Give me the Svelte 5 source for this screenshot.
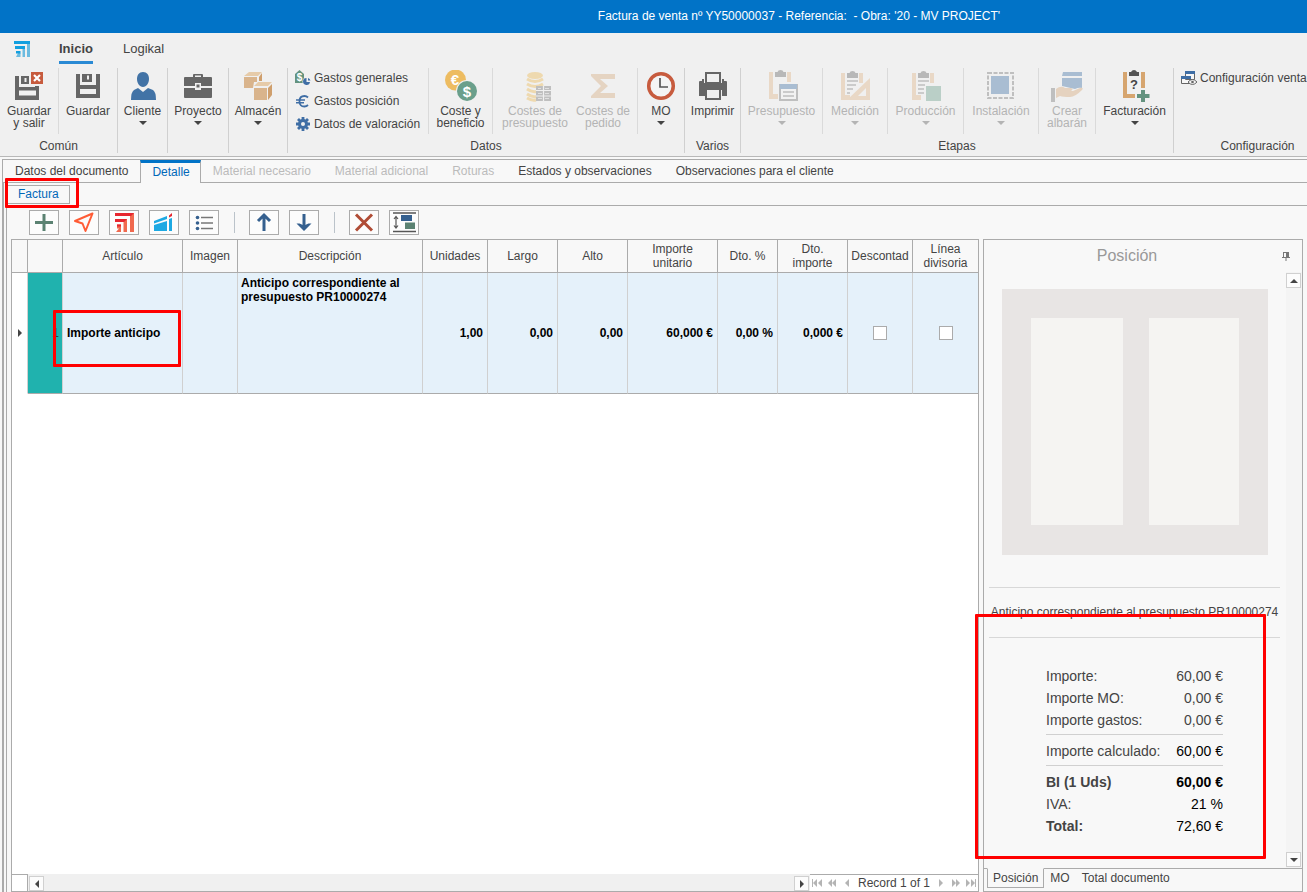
<script>
  let activeTab = $state('Detalle');
  let activePanel = $state('Posición');

  const groups = [
    {
      label: 'Común',
      clusters: [
        { width: 59, buttons: [{ icon: 'saveExit', lines: ['Guardar', 'y salir'] }] },
        { width: 58, buttons: [{ icon: 'save', lines: ['Guardar'] }] }
      ]
    },
    { label: '', clusters: [{ width: 49, buttons: [{ icon: 'client', lines: ['Cliente'], menu: true }] }] },
    { label: '', clusters: [{ width: 60, buttons: [{ icon: 'project', lines: ['Proyecto'], menu: true }] }] },
    { label: '', clusters: [{ width: 58, buttons: [{ icon: 'store', lines: ['Almacén'], menu: true }] }] },
    {
      label: 'Datos',
      clusters: [
        {
          width: 141,
          small: [
            { icon: 'tag', text: 'Gastos generales' },
            { icon: 'euro', text: 'Gastos posición' },
            { icon: 'gear', text: 'Datos de valoración' }
          ]
        },
        { width: 64, buttons: [{ icon: 'cost', lines: ['Coste y', 'beneficio'] }] },
        {
          width: 145,
          buttons: [
            { icon: 'coins', lines: ['Costes de', 'presupuesto'], off: true },
            { icon: 'sigma', lines: ['Costes de', 'pedido'], off: true }
          ]
        },
        { width: 46, buttons: [{ icon: 'clock', lines: ['MO'], menu: true }] }
      ]
    },
    { label: 'Varios', clusters: [{ width: 55, buttons: [{ icon: 'printer', lines: ['Imprimir'] }] }] },
    {
      label: 'Etapas',
      clusters: [
        { width: 82, buttons: [{ icon: 'budget', lines: ['Presupuesto'], menu: true, off: true }] },
        { width: 65, buttons: [{ icon: 'measure', lines: ['Medición'], menu: true, off: true }] },
        { width: 76, buttons: [{ icon: 'production', lines: ['Producción'], menu: true, off: true }] },
        { width: 75, buttons: [{ icon: 'install', lines: ['Instalación'], menu: true, off: true }] },
        { width: 57, buttons: [{ icon: 'delivery', lines: ['Crear', 'albarán'], off: true }] },
        { width: 77, buttons: [{ icon: 'invoice', lines: ['Facturación'], menu: true }] }
      ]
    },
    {
      label: 'Configuración',
      clusters: [{ width: 167, small: [{ icon: 'config', text: 'Configuración ventanas' }] }]
    }
  ];

  const tabs = [
    { name: 'Datos del documento' },
    { name: 'Detalle' },
    { name: 'Material necesario', off: true },
    { name: 'Material adicional', off: true },
    { name: 'Roturas', off: true },
    { name: 'Estados y observaciones' },
    { name: 'Observaciones para el cliente' }
  ];

  const tools = [
    { icon: 'add', title: 'Añadir' },
    { icon: 'send', title: 'Enviar' },
    { icon: 'profile', title: 'Perfil' },
    { icon: 'chart', title: 'Logikal' },
    { icon: 'list', title: 'Lista' },
    null,
    { icon: 'up', title: 'Subir' },
    { icon: 'down', title: 'Bajar' },
    null,
    { icon: 'remove', title: 'Eliminar' },
    { icon: 'height', title: 'Altura de fila' }
  ];

  const columns = [
    { label: '', width: 16 },
    { label: '', width: 35 },
    { label: 'Artículo', width: 120 },
    { label: 'Imagen', width: 55 },
    { label: 'Descripción', width: 185 },
    { label: 'Unidades', width: 65 },
    { label: 'Largo', width: 70 },
    { label: 'Alto', width: 70 },
    { label: 'Importe\nunitario', width: 90 },
    { label: 'Dto. %', width: 60 },
    { label: 'Dto.\nimporte', width: 70 },
    { label: 'Descontad', width: 65 },
    { label: 'Línea\ndivisoria', width: 65 }
  ];

  const amounts = ['1,00', '0,00', '0,00', '60,000 €', '0,00 %', '0,000 €'];

  const summary = [
    { label: 'Importe:', value: '60,00 €' },
    { label: 'Importe MO:', value: '0,00 €' },
    { label: 'Importe gastos:', value: '0,00 €', line: true },
    { label: 'Importe calculado:', value: '60,00 €', dark: true, line: true },
    { label: 'BI (1 Uds)', value: '60,00 €', dark: true, boldLabel: true, boldValue: true },
    { label: 'IVA:', value: '21 %', dark: true },
    { label: 'Total:', value: '72,60 €', dark: true, boldLabel: true }
  ];

  const panels = ['Posición', 'MO', 'Total documento'];
</script>

{#snippet clip(color)}
  <path d="M2 2h4v22h5v5H2zM20 2h4v10h-4z" fill={color} />
  <path d="M8 2h2.500q.5-2 3-2t3 2H19v5H8z" fill="#666" />
{/snippet}

{#snippet bigIcon(name)}
  <svg class="big-icon" viewBox="0 0 32 32" aria-hidden="true">
    {#if name === 'saveExit'}
      <path fill-rule="evenodd" fill="#666" d="M2 6h4v11h20v13H2zM6 20.500h17v5H6z" />
      <path fill-rule="evenodd" fill="#666" d="M8 6h8v8H8zM11.500 8h2v4h-2z" />
      <path fill="#666" d="M22 16h4v3h-4z" />
      <rect x="18" y="2" width="12" height="12" fill="#c75b3e" />
      <path d="M21 5l6 6M27 5l-6 6" stroke="#fff" stroke-width="2.200" />
    {:else if name === 'save'}
      <path fill-rule="evenodd" fill="#666" d="M4 4h4v11h16V4h4v24H4zM8 19h16v5H8z" />
      <path fill-rule="evenodd" fill="#666" d="M10 4h10v8H10zM15 5.500h2v4h-2z" />
    {:else if name === 'client'}
      <path fill="#4273a6" d="M16 2c4 0 6 3 6 7s-2.500 8-6 8-6-4-6-8 2-7 6-7zM11 18l5 4 5-4 5 2q3 2 3 10H4q0-8 3-10z" />
    {:else if name === 'project'}
      <path fill-rule="evenodd" fill="#666" d="M11 7V5q0-1 1-1h8q1 0 1 1v2h8q1 0 1 1v8H19v-3h-6v3H2V8q0-1 1-1zM13 7h6V5.500h-6z" />
      <path fill="#666" d="M2 18h11v2h6v-2h11v9q0 1-1 1H3q-1 0-1-1zM14.500 14.500h3v3h-3z" />
    {:else if name === 'store'}
      <path fill="#d9b48c" d="M2 7h13v5h-3l-1 6H2zM12 18h13v12H12z" />
      <path fill="#e6cba9" d="M2 6l5-4h13l-4 4zM12 16l4-4h14l-4 4z" />
      <path fill="#cf9f6d" d="M17 7l3-4v8h-3zM26 18l4-4v11l-4 5z" />
    {:else if name === 'cost'}
      <circle cx="10.500" cy="10" r="10.500" fill="#edbc61" />
      <text x="10" y="15" class="coin">€</text>
      <circle cx="22" cy="21" r="11" fill="#f0f0f0" />
      <circle cx="22" cy="21" r="10" fill="#6a9f8b" />
      <text x="22" y="26.500" class="coin">$</text>
    {:else if name === 'coins'}
      <ellipse cx="16" cy="5.500" rx="8" ry="3.500" fill="#edb84f" />
      <path d="M8 9q8 5 16 0M8 14q8 5 16 0M8 19q5 3.500 9 2.500M8 24q5 3.500 9 2.500M8 28q5 3 9 2" fill="none" stroke="#edb84f" stroke-width="3" />
      <path d="M17 16h15v15H17z" fill="#777" />
      <path d="M17 20.500h15M17 26h15M24.500 16v15" stroke="#f0f0f0" stroke-width="1.200" />
      <path d="M19 18.500h3M26 18.500h4M19 23.500h4M26 23.500h4M19 28.500h4M26 28.500h4" stroke="#ccc" />
    {:else if name === 'sigma'}
      <path d="M4 4h24v5H13l8 7-8 7h15v5H4v-2l10-10L4 6z" fill="#d6ab80" />
    {:else if name === 'clock'}
      <circle cx="16" cy="16" r="12.300" fill="#f4f4f4" stroke="#c75b3e" stroke-width="3.500" />
      <path d="M15 8v9h8" fill="none" stroke="#555" stroke-width="1.700" />
    {:else if name === 'printer'}
      <path fill="#666" d="M2 12q0-1 1-1h2V9h2v4h18V9h2v2h2q1 0 1 1v14h-5v-6H8v6H2z" />
      <path fill-rule="evenodd" fill="#666" d="M8 2h16v11H8zM10 4h12v8H10z" />
      <path fill-rule="evenodd" fill="#666" d="M8 18h16v12H8zM10 20h12v8H10z" />
    {:else if name === 'budget'}
      <g transform="translate(1 0)">{@render clip('#dfb688')}</g>
      <path d="M13 14h19v17H13z" fill="#777" />
      <path d="M15 19h15v10H15z" fill="#f7f7f7" />
      <path d="M14 14h17v5H14z" fill="#4273a6" />
      <path d="M17 22h11M17 26h11" stroke="#777" stroke-width="1.500" />
    {:else if name === 'measure'}
      <g transform="translate(0 1)">{@render clip('#dfb688')}</g>
      <path d="M8 11h11M8 15h9M8 19h6M8 23h3" stroke="#777" stroke-width="1.500" />
      <path fill-rule="evenodd" d="M31 8v22H8zM27 18v8h-8z" fill="#dfb688" />
    {:else if name === 'production'}
      <g transform="translate(0 1)">{@render clip('#dfb688')}</g>
      <path d="M8 11h11M8 15h7M8 19h6M8 23h6" stroke="#777" stroke-width="1.500" />
      <path d="M16 16h15v15H16z" fill="#6a9f8b" />
    {:else if name === 'install'}
      <path d="M3 3h25v25H3z" fill="none" stroke="#777" stroke-width="2" stroke-dasharray="4 1.500" />
      <path d="M6 6h18v18H6z" fill="#4273a6" />
    {:else if name === 'delivery'}
      <path d="M12 2h19v4H11zM11 8h20v10q-3-1-7 1l-13-3z" fill="#4273a6" />
      <path d="M0 18h4v14H0z" fill="#777" />
      <path d="M5 19q5-4 9-1h6q3 1 0 3h-5 7l7-3q4-1 2 2-7 7-12 7-7 0-10-1l-4 2z" fill="#d6a777" />
    {:else if name === 'invoice'}
      <path d="M4 2h4v22h8v4H4zM22 2h4v16h-4z" fill="#d6a56f" />
      <path d="M10 2h2q1-2 3-2t3 2h2v4H10z" fill="#555" />
      <text x="15" y="19" class="question">?</text>
      <path d="M22 20h4v4h4.500v4H26v4h-4v-4h-4v-4h4z" fill="#64937f" />
    {/if}
  </svg>
{/snippet}

{#snippet smallIcon(name)}
  <svg class="small-icon" viewBox="0 0 16 16" aria-hidden="true">
    {#if name === 'tag'}
      <path d="M0 4l4.500-4L9 4v9H0z" fill="#64937f" />
      <text x="4.500" y="11" class="tiny-dollar">$</text>
      <circle cx="12" cy="11.500" r="4.500" fill="#f0f0f0" />
      <path d="M11.500 8v4h3.500a3.500 3.500 0 1 1-3.500-4z" fill="#3f6ea5" />
      <path d="M13 8v2.500h2.500Q15 8.500 13 8z" fill="#3f6ea5" />
    {:else if name === 'euro'}
      <path d="M13 4.500Q11.500 3 9.500 3q-5 0-5 5.300t5 5.200q2 0 3.500-1.500" fill="none" stroke="#3f6ea5" stroke-width="1.800" />
      <path d="M1 7h9M1 9.800h8" stroke="#3f6ea5" stroke-width="1.400" />
    {:else if name === 'gear'}
      <path d="M8 1v14M1 8h14M3 3l10 10M13 3L3 13" stroke="#3f6ea5" stroke-width="2.800" />
      <circle cx="8" cy="8" r="5" fill="#3f6ea5" />
      <circle cx="8" cy="8" r="2" fill="#f0f0f0" />
    {:else if name === 'config'}
      <path d="M4.500 1.500h9v8h-9zM.5 6.500h9v7h-9z" fill="#f7f7f7" stroke="#666" />
      <path d="M4 1h10v3H4zM0 6h10v3H0z" fill="#3f6ea5" />
      <path d="M7 12q4.500-5 9 0-4.500 5-9 0z" fill="#f7f7f7" stroke="#666" />
      <circle cx="11.500" cy="12" r="1.300" fill="#666" />
    {/if}
  </svg>
{/snippet}

{#snippet toolIcon(name)}
  <svg class="tool-icon" viewBox="0 0 28 23" aria-hidden="true">
    {#if name === 'add'}
      <path d="M14 3v17M5 11.500h18" stroke="#5b8272" stroke-width="3" />
    {:else if name === 'send'}
      <path d="M22.500 2.500L5 10l7.500 2.500L15.500 20z" fill="none" stroke="#ff5c36" stroke-width="2" stroke-linejoin="round" />
    {:else if name === 'profile'}
      <path d="M24 2v19h-4V5l1-3zM17 8v13h-3.500V11l1-3zM11 13.500V21H6l3-3.500H7v-4z" fill="#f0694f" />
      <path d="M5 2h19l-3 3H5zM5 8h12l-3 3H5zM7 13.500h4v2H7z" fill="#e6262f" />
    {:else if name === 'chart'}
      <path d="M4 10l13-5v3L4 12.500zM4 14l13-4v10H4zM19 8l3-1v13h-3z" fill="#1da9e3" />
      <path d="M19 4.500L22 2v3l-3 1.500z" fill="#e6262f" />
    {:else if name === 'list'}
      <path d="M11 6.500h12M11 12h12M11 17.500h12" stroke="#777" stroke-width="1.500" />
      <circle cx="7.500" cy="6.500" r="1.800" fill="#35608f" />
      <circle cx="7.500" cy="12" r="1.800" fill="#35608f" />
      <circle cx="7.500" cy="17.500" r="1.800" fill="#35608f" />
    {:else if name === 'up'}
      <path d="M14 20V5M8 10l6-6 6 6" fill="none" stroke="#35608f" stroke-width="3" />
    {:else if name === 'down'}
      <path d="M14 3v15" stroke="#35608f" stroke-width="3" />
      <path d="M6.500 12.500h3l4.500 2 4.500-2h3L14 20z" fill="#35608f" />
    {:else if name === 'remove'}
      <path d="M6 3.500l16 16M22 3.500l-16 16" stroke="#b04c35" stroke-width="3" />
    {:else if name === 'height'}
      <path d="M3 2h23M3 20.500h23" stroke="#555" stroke-width="1.500" />
      <path d="M6 6v10M4 8l2-2.500L8 8M4 14.500L6 17l2-2.500" fill="none" stroke="#555" stroke-width="1.200" />
      <path d="M11 4h11v6H11z" fill="#35608f" />
      <path d="M15 11.500h10V18H15z" fill="#5b8272" />
    {/if}
  </svg>
{/snippet}

<div class="window">
  <header class="titlebar">Factura de venta nº YY50000037 - Referencia: &nbsp;- Obra: '20 - MV PROJECT'</header>

  <section class="ribbon">
    <nav class="ribbon-tabs">
      <svg class="logo" viewBox="0 0 16 16" aria-hidden="true">
        <path d="M13 3h3v13h-3zM8.500 8H11v8H8.500zM4 12h2.500v4H2z" fill="#6cbbe0" />
        <path d="M0 0h16v3H0zM1 5h10v3H1zM2 10h4.500v2.500H2z" fill="#139fdf" />
      </svg>
      <button type="button" class="ribbon-tab selected">Inicio</button>
      <button type="button" class="ribbon-tab">Logikal</button>
    </nav>

    <div class="ribbon-groups">
      {#each groups as group}
        <div class="group">
          <div class="clusters">
            {#each group.clusters as cluster}
              <div class="cluster" class:pair={cluster.buttons?.length === 2} style={`width:${cluster.width}px`}>
                {#if cluster.small}
                  <div class="small-list">
                    {#each cluster.small as item}
                      <button type="button" class="small-button">
                        {@render smallIcon(item.icon)}
                        {item.text}
                      </button>
                    {/each}
                  </div>
                {:else}
                  {#each cluster.buttons as item}
                    <button type="button" class="big-button" disabled={item.off}>
                      {@render bigIcon(item.icon)}
                      {#each item.lines as line}
                        <span>{line}</span>
                      {/each}
                      {#if item.menu}
                        <i class="caret"></i>
                      {/if}
                    </button>
                  {/each}
                {/if}
              </div>
            {/each}
          </div>
          <div class="group-label">{group.label}</div>
        </div>
      {/each}
    </div>
  </section>

  <main class="document">
    <nav class="tabs">
      {#each tabs as tab}
        <button
          type="button"
          class="tab"
          class:active={tab.name === activeTab}
          disabled={tab.off}
          onclick={() => (activeTab = tab.name)}
        >
          {tab.name}
        </button>
      {/each}
    </nav>

    <div class="page">
      <div class="subtabs">
        <button type="button" class="subtab">
          Factura
          <span class="mark mark-tab"></span>
        </button>
      </div>

      <div class="detail">
        <div class="toolbar">
          {#each tools as tool}
            {#if tool}
              <button type="button" class="tool" aria-label={tool.title}>
                {@render toolIcon(tool.icon)}
              </button>
            {:else}
              <span class="tool-separator"></span>
            {/if}
          {/each}
        </div>

        <div class="workspace">
          <section class="grid">
            <table>
              <colgroup>
                {#each columns as column}
                  <col style={`width:${column.width}px`} />
                {/each}
              </colgroup>
              <thead>
                <tr>
                  {#each columns as column}
                    <th scope="col">{column.label}</th>
                  {/each}
                </tr>
              </thead>
              <tbody>
                <tr>
                  <td class="indicator"><i class="arrow right"></i></td>
                  <td class="number">1</td>
                  <td class="article">
                    Importe anticipo
                    <span class="mark mark-article"></span>
                  </td>
                  <td></td>
                  <td class="description">Anticipo correspondiente al presupuesto PR10000274</td>
                  {#each amounts as amount}
                    <td class="amount">{amount}</td>
                  {/each}
                  <td class="check"><input type="checkbox" aria-label="Descontado" /></td>
                  <td class="check"><input type="checkbox" aria-label="Línea divisoria" /></td>
                </tr>
              </tbody>
            </table>

            <footer class="grid-footer">
              <span class="corner"></span>
              <div class="hscroll">
                <button type="button" class="scroll-button" aria-label="Izquierda"><i class="arrow left"></i></button>
                <button type="button" class="scroll-button" aria-label="Derecha"><i class="arrow right"></i></button>
              </div>
              <div class="records">
                <button type="button" aria-label="Primero">
                  <svg width="10" height="8" viewBox="0 0 10 8"><path d="M0 0h1v8H0zM5 0v8L1 4zM10 0v8L6 4z" /></svg>
                </button>
                <button type="button" aria-label="Página anterior">
                  <svg width="10" height="8" viewBox="0 0 10 8"><path d="M5 0v8L1 4zM9 0v8L5 4z" /></svg>
                </button>
                <button type="button" aria-label="Anterior">
                  <svg width="10" height="8" viewBox="0 0 10 8"><path d="M7 0v8L3 4z" /></svg>
                </button>
                <span>Record 1 of 1</span>
                <button type="button" aria-label="Siguiente">
                  <svg width="10" height="8" viewBox="0 0 10 8"><path d="M3 0v8l4-4z" /></svg>
                </button>
                <button type="button" aria-label="Página siguiente">
                  <svg width="10" height="8" viewBox="0 0 10 8"><path d="M1 0v8l4-4zM5 0v8l4-4z" /></svg>
                </button>
                <button type="button" aria-label="Último">
                  <svg width="10" height="8" viewBox="0 0 10 8"><path d="M0 0v8l4-4zM5 0v8l4-4zM9 0h1v8H9z" /></svg>
                </button>
              </div>
            </footer>
          </section>

          <aside class="panel">
            <div class="panel-head">
              <h2>Posición</h2>
              <svg class="pin" viewBox="0 0 8 9" aria-hidden="true">
                <path fill-rule="evenodd" d="M1 0h6v5h1v1H4.500v3h-1V6H0V5h1zM2 1v4h2V1z" fill="#777" />
              </svg>
            </div>

            <div class="panel-body">
              <div class="position">
                <svg class="preview" viewBox="0 0 266 266" aria-hidden="true">
                  <path d="M0 0h266v266H0z" fill="#e8e5e4" />
                  <path d="M29 29h92v207H29zM147 29h90v207h-90z" fill="#f5f4f2" />
                </svg>
                <p class="position-text">Anticipo correspondiente al presupuesto PR10000274</p>

                <dl class="summary">
                  {#each summary as row}
                    <div class:line={row.line}>
                      <dt class:bold={row.boldLabel}>{row.label}</dt>
                      <dd class:dark={row.dark} class:bold={row.boldValue}>{row.value}</dd>
                    </div>
                  {/each}
                  <span class="mark mark-summary"></span>
                </dl>
              </div>

              <div class="vscroll">
                <button type="button" class="scroll-button" aria-label="Arriba"><i class="arrow up"></i></button>
                <button type="button" class="scroll-button" aria-label="Abajo"><i class="arrow down"></i></button>
              </div>
            </div>

            <nav class="panel-tabs">
              {#each panels as name}
                <button type="button" class:active={name === activePanel} onclick={() => (activePanel = name)}>
                  {name}
                </button>
              {/each}
            </nav>
          </aside>
        </div>
      </div>
    </div>
  </main>
</div>

<style>
  :global(body) {
    margin: 0;
    background: #f8f8f8;
  }

  .window,
  .window * {
    box-sizing: border-box;
  }

  .window {
    display: flex;
    flex-direction: column;
    min-height: 100vh;
    overflow: hidden;
    color: #444;
    font-family: 'Liberation Sans', Arial, sans-serif;
    font-size: 12px;
    line-height: 14px;
  }

  button {
    margin: 0;
    padding: 0;
    border: 0;
    color: inherit;
    background: none;
    font: inherit;
    white-space: nowrap;
  }

  svg {
    display: block;
    flex: none;
  }

  .titlebar {
    height: 33px;
    padding-left: 291px;
    color: #fff;
    background: #0173c7;
    line-height: 32px;
    text-align: center;
    white-space: nowrap;
  }

  .ribbon {
    height: 124px;
    border-bottom: 1px solid #b8b8b8;
    background: #f0f0f0;
  }

  .ribbon-tabs {
    display: flex;
    gap: 30px;
    height: 31px;
    padding-left: 14px;
    font-size: 13px;
  }

  .logo {
    width: 16px;
    height: 16px;
    margin: 8px -1px 0 0;
  }

  .ribbon-tab {
    padding-top: 4px;
    border-bottom: 3px solid transparent;
    line-height: 24px;
  }

  .ribbon-tab.selected {
    border-color: #2a8ad4;
    font-weight: 700;
  }

  .ribbon-groups {
    display: flex;
    padding-top: 4px;
  }

  .group {
    flex: none;
    height: 85px;
    border-right: 1px solid #d0d0d0;
  }

  .clusters {
    display: flex;
    height: 66px;
  }

  .cluster {
    display: flex;
    flex: none;
    border-right: 1px solid #dadada;
  }

  .cluster:last-child {
    border-right: 0;
  }

  .cluster.pair {
    justify-content: flex-end;
  }

  .big-button {
    display: flex;
    flex: 1 1 0;
    flex-direction: column;
    align-items: center;
    min-width: 0;
    padding-top: 2px;
    line-height: 12px;
  }

  .pair .big-button {
    flex: 0 0 68px;
  }

  .big-icon {
    width: 32px;
    height: 32px;
    margin-bottom: 3px;
  }

  .big-button:disabled {
    color: #b4b4b4;
  }

  .big-button:disabled .big-icon {
    opacity: 0.4;
  }

  .caret {
    margin-top: 4px;
    border: 4px solid transparent;
    border-top-color: currentColor;
    border-bottom: 0;
  }

  .coin {
    fill: #fff;
    font-size: 15px;
    font-weight: 700;
    text-anchor: middle;
  }

  .question {
    fill: #444;
    font-size: 13px;
    font-weight: 700;
    text-anchor: middle;
  }

  .tiny-dollar {
    fill: #fff;
    font-size: 10px;
    font-weight: 700;
    text-anchor: middle;
  }

  .small-list {
    display: flex;
    flex-direction: column;
    gap: 7px;
    padding: 2px 0 0 7px;
  }

  .small-button {
    display: flex;
    align-items: center;
    gap: 3px;
    height: 16px;
  }

  .small-icon {
    width: 16px;
    height: 16px;
  }

  .group-label {
    padding-top: 5px;
    text-align: center;
  }

  .document {
    display: flex;
    flex: 1;
    flex-direction: column;
    margin: 2px 0 0 2px;
    border: solid #ababab;
    border-width: 1px 0 0 1px;
    background: #f8f8f8;
  }

  .tabs {
    display: flex;
    height: 23px;
    border-bottom: 1px solid #ababab;
  }

  .tab {
    height: 22px;
    padding: 0 12px;
    line-height: 22px;
  }

  .tab:disabled {
    color: #bbb;
  }

  .tab.active {
    height: 23px;
    padding: 0 10px 2px 11px;
    border: 1px solid #ababab;
    border-top: 3px solid #0173c7;
    border-bottom: 0;
    color: #0168b8;
    background: #f8f8f8;
    line-height: 18px;
  }

  .page {
    display: flex;
    flex: 1;
    flex-direction: column;
    border-left: 1px solid #ababab;
  }

  .subtabs {
    height: 22px;
    padding: 2px 0 0 3px;
  }

  .subtab {
    position: relative;
    height: 19px;
    padding: 0 10px;
    border: 1px solid #ababab;
    color: #0168b8;
    line-height: 17px;
  }

  .mark {
    position: absolute;
    z-index: 2;
    border: 3px solid #f00;
    border-radius: 1px;
    pointer-events: none;
  }

  .mark-tab {
    top: -8px;
    left: -3px;
    width: 74px;
    height: 30px;
  }

  .detail {
    display: flex;
    flex: 1;
    flex-direction: column;
    margin-left: 2px;
    border: solid #ababab;
    border-width: 1px 0 0 1px;
  }

  .toolbar {
    display: flex;
    align-items: center;
    gap: 10px;
    padding: 4px 0 4px 22px;
  }

  .tool {
    height: 25px;
    border: 1px solid #ababab;
    background: #fcfcfc;
  }

  .tool-icon {
    width: 28px;
    height: 23px;
  }

  .tool-separator {
    width: 1px;
    height: 21px;
    margin: 0 4px 0 5px;
    background: #bbc3ca;
  }

  .workspace {
    display: flex;
    flex: 1;
    gap: 4px;
    padding: 0 4px 0 4px;
  }

  .grid {
    display: flex;
    flex: 1;
    flex-direction: column;
    justify-content: space-between;
    min-width: 0;
    border: 1px solid #ababab;
    background: #fff;
  }

  table {
    width: 100%;
    border-spacing: 0;
    table-layout: fixed;
  }

  th {
    height: 33px;
    padding: 0 2px;
    border: solid #ababab;
    border-width: 0 1px 1px 0;
    background: #f8f8f8;
    font-weight: 400;
    white-space: pre-line;
  }

  td {
    height: 121px;
    padding: 0 4px;
    border: solid #ababab;
    border-width: 0 1px 1px 0;
    border-right-color: #d0d0d0;
    color: #000;
    background: #e5f1fa;
    font-weight: 700;
  }

  th:last-child,
  td:last-child {
    border-right: 0;
  }

  td.indicator {
    padding: 0 0 0 6px;
    border-bottom-color: #fff;
    color: #444;
    background: #fff;
  }

  td.number {
    padding-right: 3px;
    color: #14504d;
    background: #20b2ae;
    font-weight: 400;
    text-align: right;
  }

  td.article {
    position: relative;
  }

  .mark-article {
    top: 37px;
    left: -10px;
    width: 128px;
    height: 57px;
  }

  td.description {
    padding: 3px;
    vertical-align: top;
  }

  td.amount {
    text-align: right;
    white-space: nowrap;
  }

  td.check {
    text-align: center;
  }

  .check input {
    appearance: none;
    width: 14px;
    height: 14px;
    margin: 0;
    border: 1px solid #ababab;
    background: #fff;
    vertical-align: middle;
  }

  .check input:checked {
    background: #0173c7;
  }

  .arrow {
    display: block;
    width: 0;
    height: 0;
    border: 4px solid transparent;
  }

  .arrow.right {
    border-right: 0;
    border-left-color: #444;
  }

  .arrow.left {
    border-left: 0;
    border-right-color: #444;
  }

  .arrow.up {
    border-top: 0;
    border-bottom-color: #444;
  }

  .arrow.down {
    border-bottom: 0;
    border-top-color: #444;
  }

  .grid-footer {
    display: flex;
    height: 17px;
  }

  .corner {
    width: 16px;
    border: solid #ababab;
    border-width: 1px 1px 0 0;
  }

  .hscroll {
    display: flex;
    flex: 1;
    align-items: flex-end;
    justify-content: space-between;
    padding: 0 1px;
    background: #f0f0f0;
  }

  .scroll-button {
    display: grid;
    place-items: center;
    width: 15px;
    height: 15px;
    border: 1px solid #d0d0d0;
    background: #fcfcfc;
  }

  .records {
    display: flex;
    align-items: center;
    gap: 5px;
    width: 168px;
    padding: 0 2px;
    border-top: 1px solid #ababab;
    white-space: nowrap;
  }

  .records span {
    flex: 1;
    text-align: center;
  }

  .records svg {
    fill: #b4b4b4;
  }

  .panel {
    display: flex;
    flex: 0 0 320px;
    flex-direction: column;
    border: 1px solid #ababab;
  }

  .panel-head {
    display: flex;
    align-items: center;
    height: 32px;
    padding-right: 12px;
  }

  h2 {
    flex: 1;
    margin: 0;
    padding-right: 12px;
    color: #999;
    font-size: 16px;
    font-weight: 400;
    text-align: center;
  }

  .pin {
    width: 8px;
    height: 9px;
  }

  .panel-body {
    display: flex;
    flex: 1;
  }

  .position {
    flex: 1;
    min-width: 0;
    padding: 17px 6px 0 5px;
  }

  .preview {
    width: 266px;
    height: 266px;
    margin: 0 auto;
  }

  .position-text {
    margin: 32px 0 0;
    border: solid #d8d8d8;
    border-width: 1px 0;
    line-height: 49px;
    text-align: center;
    white-space: nowrap;
  }

  .summary {
    position: relative;
    width: 177px;
    margin: 27px auto 0;
    font-size: 14px;
    line-height: 22px;
  }

  .summary div {
    display: flex;
    justify-content: space-between;
    white-space: nowrap;
  }

  .summary .line {
    margin-bottom: 5px;
    padding-bottom: 3px;
    border-bottom: 1px solid #d0d0d0;
  }

  dd {
    margin: 0;
  }

  .dark {
    color: #000;
  }

  .bold {
    font-weight: 700;
  }

  .mark-summary {
    top: -51px;
    left: -71px;
    width: 291px;
    height: 245px;
  }

  .vscroll {
    display: flex;
    flex-direction: column;
    justify-content: space-between;
    width: 16px;
    padding: 1px 0;
    background: #f4f4f4;
  }

  .panel-tabs {
    display: flex;
    height: 23px;
    padding-left: 3px;
    border-top: 1px solid #ababab;
  }

  .panel-tabs button {
    height: 19px;
    padding: 0 6px;
    line-height: 19px;
  }

  .panel-tabs .active {
    height: 20px;
    margin-top: -1px;
    padding: 0 5px;
    border: 1px solid #ababab;
    border-top-color: #f8f8f8;
    background: #f8f8f8;
    line-height: 18px;
  }
</style>
